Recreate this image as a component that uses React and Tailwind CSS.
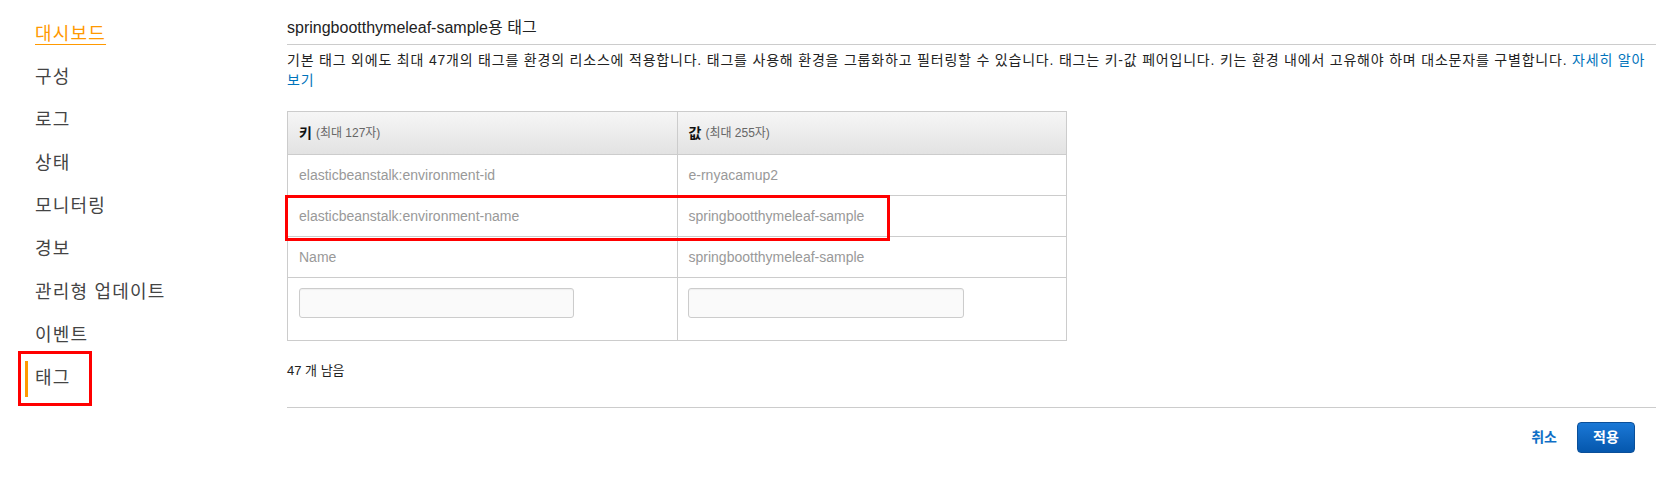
import React from "react";

const navItems = ["대시보드", "구성", "로그", "상태", "모니터링", "경보", "관리형 업데이트", "이벤트", "태그"];

const tags = [
  { key: "elasticbeanstalk:environment-id", value: "e-rnyacamup2" },
  { key: "elasticbeanstalk:environment-name", value: "springbootthymeleaf-sample" },
  { key: "Name", value: "springbootthymeleaf-sample" },
];

function Sidebar() {
  return (
    <div className="relative w-[287px] shrink-0 pt-[13px] tracking-[1.2px]">
      {navItems.map((item, i) => {
        if (i === 0) {
          return (
            <div key={item} className="flex h-[43px] items-center pl-[35px]">
              <span className="text-[18px] text-[#ff9900] underline underline-offset-[4px]">{item}</span>
            </div>
          );
        }
        if (item === "태그") {
          return (
            <div key={item} className="flex h-[43px] items-center pl-[25px]">
              <span className="flex h-[36px] items-center border-l-[3px] border-[#ff9900] pl-[7px] text-[18px] text-[#444]">
                {item}
              </span>
            </div>
          );
        }
        return (
          <div key={item} className="flex h-[43px] items-center pl-[35px] text-[18px] text-[#444]">
            {item}
          </div>
        );
      })}
      {/* highlight box */}
      <div className="absolute left-[18px] top-[351px] h-[55px] w-[74px] border-[3px] border-[#ff0000]" />
    </div>
  );
}

function TagTable() {
  return (
    <div className="relative mt-[21px] w-[780px]">
      <div className="border-l border-t border-[#ccc]">
        <div className="grid grid-cols-2 bg-gradient-to-b from-[#f6f6f6] to-[#e2e2e2]">
          <div className="flex h-[43px] items-center border-b border-r border-[#ccc] px-[11px]">
            <span className="text-[14px] font-bold text-[#111]">키</span>
            <span className="ml-[4px] text-[12px] text-[#666]">(최대 127자)</span>
          </div>
          <div className="flex h-[43px] items-center border-b border-r border-[#ccc] px-[11px]">
            <span className="text-[14px] font-bold text-[#111]">값</span>
            <span className="ml-[4px] text-[12px] text-[#666]">(최대 255자)</span>
          </div>
        </div>
        {tags.map((t) => (
          <div key={t.key} className="grid grid-cols-2">
            <div className="flex h-[41px] items-center border-b border-r border-[#ccc] px-[11px] text-[14px] text-[#999]">
              {t.key}
            </div>
            <div className="flex h-[41px] items-center border-b border-r border-[#ccc] px-[11px] text-[14px] text-[#999]">
              {t.value}
            </div>
          </div>
        ))}
        <div className="grid grid-cols-2">
          <div className="h-[63px] border-b border-r border-[#ccc] px-[11px] pt-[10px]">
            <input className="h-[30px] w-[275px] rounded-[3px] border border-[#ccc] bg-[#fafafa] shadow-[inset_0_1px_1px_rgba(0,0,0,0.05)] outline-none" />
          </div>
          <div className="h-[63px] border-b border-r border-[#ccc] px-[10px] pt-[10px]">
            <input className="h-[30px] w-[276px] rounded-[3px] border border-[#ccc] bg-[#fafafa] shadow-[inset_0_1px_1px_rgba(0,0,0,0.05)] outline-none" />
          </div>
        </div>
      </div>
      {/* highlight box */}
      <div className="absolute left-[-2px] top-[84px] h-[46px] w-[605px] border-[3px] border-[#ff0000]" />
    </div>
  );
}

export default function App() {
  return (
    <div className="flex h-[477px] w-[1666px] bg-white font-['Liberation_Sans','Noto_Sans_CJK_KR',sans-serif]">
      <Sidebar />
      <div className="flex-1 pr-[10px]">
        <div className="border-b border-[#ccc] pb-[6px] pt-[18px] text-[16px] leading-[20px] text-[#222]">
          springbootthymeleaf-sample용 태그
        </div>
        <p className="mt-[5px] text-[14px] leading-[20px] tracking-[0.8px] text-[#222]">
          기본 태그 외에도 최대 47개의 태그를 환경의 리소스에 적용합니다. 태그를 사용해 환경을 그룹화하고 필터링할 수 있습니다. 태그는 키-값 페어입니다. 키는 환경 내에서 고유해야 하며 대소문자를 구별합니다.{" "}
          <a href="#" className="text-[#0073bb]">
            자세히 알아
            <br />
            보기
          </a>
        </p>
        <TagTable />
        <div className="mt-[20px] text-[13px] leading-[20px] text-[#222]">47 개 남음</div>
        <div className="mt-[26px] flex items-center justify-end gap-[20px] border-t border-[#ccc] pr-[21px] pt-[14px]">
          <a href="#" className="text-[14px] font-bold text-[#0f6fc6]">
            취소
          </a>
          <button className="h-[31px] w-[58px] rounded-[4px] border border-[#0a4f99] bg-gradient-to-b from-[#1a78d6] to-[#0557ad] text-[14px] font-bold text-white">
            적용
          </button>
        </div>
      </div>
    </div>
  );
}
